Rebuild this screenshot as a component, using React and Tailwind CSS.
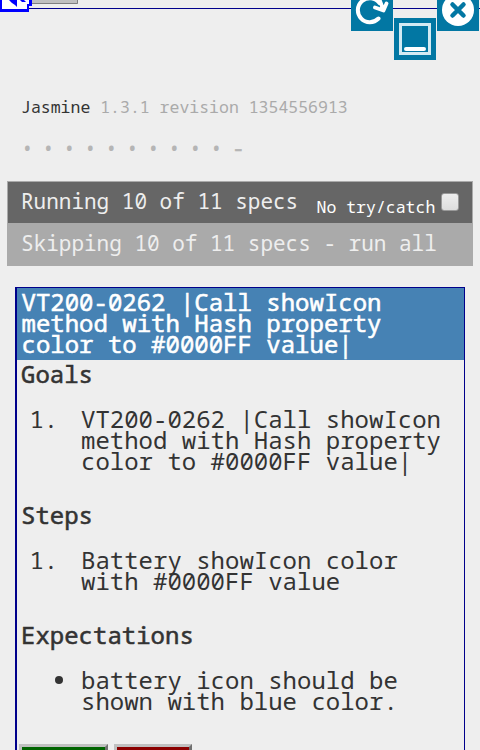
import React from 'react';

const Item = ({ mark, children }) => (
  <div className="flex">
    <div className="-ml-[6px] w-[66px] shrink-0 whitespace-pre">{mark}</div>
    <div>{children}</div>
  </div>
);

const Bullet = () => <span className="ml-[40px] mt-[7px] block h-[8px] w-[8px] rounded-full bg-[#333333]" />;

const heading = 'font-normal [-webkit-text-stroke:0.55px_currentColor]';

export default function App() {
  return (
    <div className="relative h-[750px] w-[480px] overflow-hidden bg-[#eeeeee] font-['Noto_Sans_Mono','Droid_Sans_Mono','Noto_Sans_Mono_CJK_SC','Liberation_Mono',monospace] text-[#333333]">
      <div className="h-[9px] border-b border-[#00008b]" />
      <svg className="absolute left-0 top-0" width="80" height="13" viewBox="0 0 80 13">
        <path d="M28 0H78V4H28Z" fill="#c0c0c0" />
        <path d="M30 3.5H77.5V0" fill="none" stroke="#808080" />
        <path d="M0 0H32V6H29V12H0Z" fill="#0000ff" />
        <path d="M2 0H29V4H27V9H2Z" fill="#fff" />
        <path d="M9 0H17V7L15 5L12 3ZM20 0H24L26 2H22Z" fill="#0000ff" />
      </svg>
      <svg className="absolute left-[351px] top-0" width="129" height="60" viewBox="0 0 129 60">
        <path d="M0 0H42V31H0ZM43 18H85V60H43ZM86 0H128V31H86Z" fill="#0277a3" />
        <path d="M28.5 3A12 12 0 1 0 27.5 18.5" fill="none" stroke="#fff" strokeWidth="4" strokeLinecap="round" />
        <path d="M24 7.5L32.5 10.5L35.5 3.5M32 9L29 1" fill="none" stroke="#fff" strokeWidth="3.8" strokeLinecap="round" strokeLinejoin="round" />
        <rect x="49.5" y="24.5" width="29" height="29" fill="none" stroke="#d3eaf3" strokeWidth="3" />
        <path d="M55 49H73" stroke="#fff" strokeWidth="4" strokeLinecap="round" />
        <circle cx="107" cy="10" r="16" fill="#fff" />
        <path d="M101.5 4.5L112.5 15.5M112.5 4.5L101.5 15.5" stroke="#0277a3" strokeWidth="4.5" strokeLinecap="round" />
      </svg>

      <div className="mt-[87px] pl-[21px] text-[16.5px] leading-[22px] text-[#aaaaaa]">
        <span className="text-[#333333]">Jasmine</span> 1.3.1 revision 1354556913
      </div>
      <div className="mt-[19px] flex h-[22px] pl-[21px] text-[21px] leading-[22px] text-[#b5b5b5]">
        {Array.from({ length: 10 }, (_, i) => <span key={i} className="w-[21px]">•</span>)}
        <span className="ml-[1px] w-[21px] [-webkit-text-stroke:0.4px_currentColor]">-</span>
      </div>

      <div className="mx-[7px] mt-[22px] border border-[#aaaaaa] text-[21px] text-[#eeeeee]">
        <div className="flex h-[41px] bg-[#666666] pl-[13px] leading-[38px]">
          <span className="w-[295.5px]">Running 10 of 11 specs</span>
          <span className="text-[16.5px] leading-[49px] text-white">No try/catch</span>
          <span className="ml-[5.5px] mt-[11px] h-[18px] w-[18px] rounded-[3px] border border-[#999999] bg-linear-to-b from-[#eeeeee] to-[#dddddd]" />
        </div>
        <div className="h-[42px] bg-[#aaaaaa] pl-[13px] leading-[40px]">Skipping 10 of 11 specs - run all</div>
      </div>

      <div className="ml-[15px] mt-[21px] h-[480px] w-[450px] border border-l-2 border-[#00008b] text-[24px] leading-[21px]">
        <div className={`${heading} h-[72px] bg-[#4682b4] pl-[4.5px] pt-[3px] text-white`}>
          VT200-0262 |Call showIcon<br />method with Hash property<br />color to #0000FF value|
        </div>
        <div className="pl-[4px] pt-[3px]">
          <div className={heading}>Goals</div>
          <div className="mt-[24px]">
            <Item mark=" 1."><span className="whitespace-nowrap">VT200-0262 |Call showIcon<br />method with Hash property<br />color to #0000FF value|</span></Item>
          </div>
          <div className={`${heading} mt-[33px]`}>Steps</div>
          <div className="mt-[24px]">
            <Item mark=" 1.">Battery showIcon color<br />with #0000FF value</Item>
          </div>
          <div className={`${heading} mt-[33px]`}>Expectations</div>
          <div className="mt-[24px]">
            <Item mark={<Bullet />}>battery icon should be<br />shown with blue color.</Item>
          </div>
          <div className="-ml-[2px] mt-[33px] flex gap-[6px]">
            <div className="h-[36px] w-[89px] border-[3px] border-b-[#707070] border-l-[#c0c0c0] border-r-[#707070] border-t-[#c0c0c0] bg-[#006400]" />
            <div className="h-[36px] w-[78px] border-[3px] border-b-[#707070] border-l-[#c0c0c0] border-r-[#707070] border-t-[#c0c0c0] bg-[#8b0000]" />
          </div>
        </div>
      </div>
    </div>
  );
}
